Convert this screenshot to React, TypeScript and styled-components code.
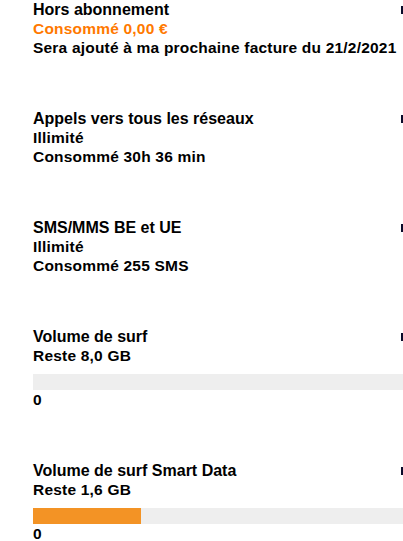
import React from "react";
import styled, { createGlobalStyle } from "styled-components";

const GlobalStyle = createGlobalStyle`
  html, body {
    margin: 0;
    padding: 0;
    background: #ffffff;
    overflow: hidden;
  }
  body {
    font-family: "Liberation Sans", Arial, Helvetica, sans-serif;
    color: #000000;
  }
`;

const colors = {
  orange: "#ff7900",
  barOrange: "#f39325",
  barTrack: "#eeeeee",
  text: "#000000",
};

const Page = styled.div`
  box-sizing: border-box;
  width: 440px;
  padding: 0 0 0 33px;
  display: flex;
  flex-direction: column;
`;

const Section = styled.section`
  display: flex;
  flex-direction: column;
  margin-bottom: 52px;
`;

const Header = styled.div`
  display: flex;
  flex-direction: row;
  align-items: center;
  justify-content: space-between;
  width: 384px;
  height: 19px;
`;

const Title = styled.div`
  font-size: 16px;
  line-height: 19px;
  font-weight: 700;
  white-space: nowrap;
`;

const Line = styled.div<{ color?: string }>`
  font-size: 15.5px;
  line-height: 19px;
  font-weight: 700;
  letter-spacing: 0.2px;
  white-space: nowrap;
  color: ${(props) => (props.color ? props.color : colors.text)};
`;

const Track = styled.div`
  width: 400px;
  height: 16px;
  margin-top: 9px;
  background-color: ${colors.barTrack};
  display: flex;
`;

const Fill = styled.div`
  height: 100%;
  background-color: ${colors.barOrange};
`;

const Handle = () => (
  <svg width="16" height="16" viewBox="0 0 16 16">
    <rect x="0" y="4" width="2" height="8" fill="#0a0a2a" />
  </svg>
);

interface ItemProps {
  title: string;
  children?: React.ReactNode;
}

const Item = (props: ItemProps) => {
  return (
    <Section>
      <Header>
        <Title>{props.title}</Title>
        <Handle />
      </Header>
      {props.children}
    </Section>
  );
};

const Gauge = ({ used }: { used: number }) => (
  <>
    <Track>
      <Fill style={{ width: `${used}px` }} />
    </Track>
    <Line>0</Line>
  </>
);

export default function App() {
  return (
    <>
      <GlobalStyle />
      <Page>
        <Item title="Hors abonnement">
          <Line color={colors.orange}>Consommé 0,00 €</Line>
          <Line>Sera ajouté à ma prochaine facture du 21/2/2021</Line>
        </Item>
        <Item title="Appels vers tous les réseaux">
          <Line>Illimité</Line>
          <Line>Consommé 30h 36 min</Line>
        </Item>
        <Item title="SMS/MMS BE et UE">
          <Line>Illimité</Line>
          <Line>Consommé 255 SMS</Line>
        </Item>
        <Item title="Volume de surf">
          <Line>Reste 8,0 GB</Line>
          <Gauge used={0} />
        </Item>
        <Item title="Volume de surf Smart Data">
          <Line>Reste 1,6 GB</Line>
          <Gauge used={108} />
        </Item>
      </Page>
    </>
  );
}
